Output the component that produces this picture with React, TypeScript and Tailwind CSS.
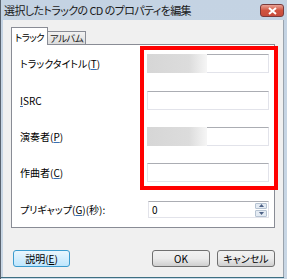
import React from 'react'

const jp = "font-['Meiryo_UI','Noto_Sans_CJK_JP',sans-serif] [font-feature-settings:'palt']"

function Key(props: { k: string }) {
  return (
    <span>
      (<span className="underline decoration-[#3a6fb0] underline-offset-1">{props.k}</span>)
    </span>
  )
}

function Field(props: { blur?: boolean }) {
  return (
    <div className="relative h-[19px] w-[122px] border border-[#e2e3ea] border-t-[#abadb3] bg-white">
      {props.blur && (
        <div className="absolute -left-px -top-px h-[19px] w-[60px] bg-gradient-to-r from-[#d6d6d6] via-[#dcdcdc] via-70% to-[#f6f6f6]" />
      )}
    </div>
  )
}

function Button(props: { label: React.ReactNode; focus?: boolean; w: string }) {
  return (
    <div
      className={
        'flex h-[17px] items-center justify-center whitespace-nowrap rounded-[3px] border text-[10px] text-black ' +
        props.w +
        ' ' +
        (props.focus
          ? 'border-[#3c9ccf] bg-gradient-to-b from-[#eaf6fd] to-[#bee6fd]'
          : 'border-[#707070] bg-gradient-to-b from-[#f2f2f2] via-[#ebebeb] via-50% to-[#cfcfcf]')
      }
    >
      {props.label}
    </div>
  )
}

export default function App() {
  return (
    <div className={'relative flex h-[279px] w-[287px] flex-col overflow-hidden border-l border-[#5a6470] bg-gradient-to-b from-[#c4d3e3] to-[#c9d7e5] ' + jp}>
      {/* title bar */}
      <div className="flex h-[20px] shrink-0 items-center whitespace-nowrap pl-[3px] text-[11px] tracking-[-0.6px] text-[#1a1a1a]">
        選択したトラックの CD のプロパティを編集
      </div>
      <div className="absolute left-[259px] top-[4px] flex h-[13px] w-[24px] items-center justify-center rounded-[3px] border border-[#7a3a3a] bg-gradient-to-b from-[#e8a296] via-[#d0533f] via-50% to-[#c74c3c]">
        <svg width="9" height="8" viewBox="0 0 9 8">
          <path d="M1 1 L8 7 M8 1 L1 7" stroke="white" strokeWidth="2" />
        </svg>
      </div>

      {/* body */}
      <div className="ml-[2px] mr-[2px] flex h-[257px] w-[281px] shrink-0 flex-col border-r border-[#9aa3ad] bg-[#f0f0f0]">
        {/* tabs */}
        <div className="ml-[8px] mt-[7px] flex items-end">
          <div className="relative z-10 -mb-px flex h-[18px] w-[37px] items-start justify-center whitespace-nowrap border border-b-0 border-[#898c95] bg-white pt-[2px] text-[9.5px] tracking-[-0.6px]">
            トラック
          </div>
          <div className="flex h-[13px] w-[38px] items-center justify-center whitespace-nowrap border border-l-0 border-b-0 border-[#898c95] bg-gradient-to-b from-[#f2f2f2] to-[#dcdcdc] text-[9.5px] tracking-[-0.6px] text-[#222]">
            アルバム
          </div>
        </div>
        <div className="ml-[8px] flex h-[184px] w-[264px] flex-col border border-[#898c95] bg-white pl-[8px] pt-[9px] text-[10px] text-black">
          <div className="flex h-[19px] items-center">
            <div className="w-[127px] whitespace-nowrap">
              トラックタイトル<Key k="T" />
            </div>
            <Field blur />
          </div>
          <div className="mt-[18px] flex h-[19px] items-center">
            <div className="w-[127px]">
              <span className="underline decoration-[#3a6fb0] underline-offset-1">I</span>SRC
            </div>
            <Field />
          </div>
          <div className="mt-[17px] flex h-[19px] items-center">
            <div className="w-[127px]">
              演奏者<Key k="P" />
            </div>
            <Field blur />
          </div>
          <div className="mt-[17px] flex h-[19px] items-center">
            <div className="w-[127px]">
              作曲者<Key k="C" />
            </div>
            <Field />
          </div>
          <div className="mt-[19px] flex h-[17px] items-center">
            <div className="w-[128px] whitespace-nowrap">
              プリギャップ<Key k="G" />(秒):
            </div>
            <div className="flex h-[17px] w-[121px] items-center justify-between border border-[#e2e3ea] border-t-[#abadb3] bg-white pl-[3px] pr-px">
              <span className="text-[10px]">0</span>
              <div className="flex h-[14px] w-[12px] flex-col gap-px">
                <div className="flex h-[7px] items-center justify-center rounded-[1px] border border-[#b6c3d2] bg-[#e4ebf3]">
                  <svg width="5" height="3" viewBox="0 0 5 3"><path d="M0 3 L2.5 0 L5 3 Z" fill="#4d6185" /></svg>
                </div>
                <div className="flex h-[7px] items-center justify-center rounded-[1px] border border-[#b6c3d2] bg-[#e4ebf3]">
                  <svg width="5" height="3" viewBox="0 0 5 3"><path d="M0 0 L5 0 L2.5 3 Z" fill="#4d6185" /></svg>
                </div>
              </div>
            </div>
          </div>
        </div>

        {/* buttons */}
        <div className="mt-[22px] flex items-center">
          <div className="ml-[10px]">
            <Button w="w-[57px]" focus label={<span>説明<span>(<span className="underline underline-offset-1">E</span>)</span></span>} />
          </div>
          <div className="ml-[82px]">
            <Button w="w-[58px]" label="OK" />
          </div>
          <div className="ml-[7px]">
            <Button w="w-[58px]" label="キャンセル" />
          </div>
        </div>
      </div>
      <div className="h-px w-[283px] bg-[#3d6f82]" />

      {/* red highlight overlay */}
      <div className="absolute left-[139px] top-[46px] h-[144px] w-[138px] border-[4px] border-[#ff0000]" />
    </div>
  )
}
